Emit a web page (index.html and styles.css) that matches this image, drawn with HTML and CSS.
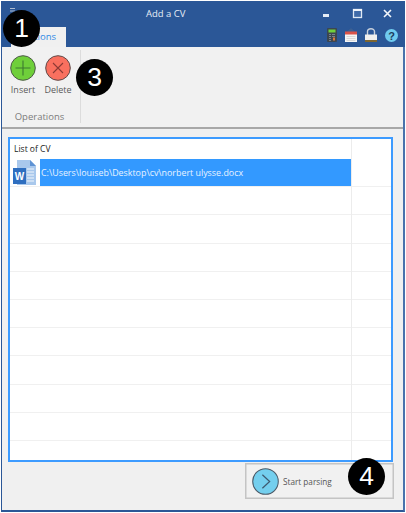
FILE: index.html
```html
<!DOCTYPE html>
<html lang="en">
<head>
<meta charset="utf-8">
<title>Add a CV</title>
<link rel="stylesheet" href="styles.css">
</head>
<body>
<div class="window">
  <header class="titlebar">
    <div class="title-row">
      <svg class="app-icon" width="5" height="4" viewBox="0 0 5 4"><path d="M0 .5h5M0 3h5" stroke="#aebcd0"/></svg>
      <span class="title">Add a CV</span>
      <div class="win-controls">
        <svg class="win-btn" width="12" height="12" viewBox="0 0 12 12"><rect x="1" y="6" width="6" height="3" fill="#e4ecf6"/></svg>
        <svg class="win-btn" width="12" height="12" viewBox="0 0 12 12"><rect x="1.500" y="1.500" width="8" height="8" fill="#3f6aa8" stroke="#dfe8f4" stroke-width="1.300"/><rect x="1" y="1" width="9" height="2" fill="#eef3fa"/></svg>
        <svg class="win-btn" width="12" height="12" viewBox="0 0 12 12"><path d="M2 2l7 7M9 2l-7 7" stroke="#f2f6fb" stroke-width="1.600" fill="none"/></svg>
      </div>
    </div>
    <div class="tab-row">
      <div class="tab">Options</div>
      <div class="tools">
        <svg class="tool-calc" width="10" height="14" viewBox="0 0 10 14"><rect width="10" height="14" rx="1" fill="#3c4650"/><rect x="1.500" y="1.500" width="7" height="3" fill="#6fd03c"/><path d="M2 6.500h2M5 6.500h3M2 8.500h2M5 8.500h3M2 10.500h2M2 12.500h2" stroke="#79838c"/><rect x="6" y="9.500" width="2" height="3" fill="#d9783a"/></svg>
        <svg width="12" height="14" viewBox="0 0 12 14"><path d="M1.500 4L6 0l4.500 4z" fill="#3c5f92"/><rect y="4" width="12" height="10" fill="#f5f5f5"/><rect y="3.500" width="12" height="3" fill="#d9534a"/><path d="M1.500 8.500h9M1.500 10.500h9M1.500 12.500h9" stroke="#d8d8d8"/></svg>
        <svg width="12" height="14" viewBox="0 0 12 14"><path d="M2.500 7V3.500a3.500 2.800 0 0 1 7 0V7" fill="none" stroke="#c9d1dc" stroke-width="1.400"/><rect y="6.500" width="12" height="5.500" fill="#f0f0ee"/><rect y="12" width="12" height="2" fill="#7d6530"/></svg>
        <svg width="13" height="13" viewBox="0 0 13 13"><circle cx="6.500" cy="6.500" r="6.500" fill="#6fcbef"/><text x="6.500" y="10.500" class="help-mark" text-anchor="middle">?</text></svg>
      </div>
    </div>
  </header>

  <section class="ribbon">
    <div class="group">
      <div class="actions">
        <div class="action">
          <svg width="26" height="26" viewBox="0 0 26 26"><circle cx="13" cy="13" r="12.300" fill="#6fcf3a" stroke="#4d5a48" stroke-width="1"/><path d="M13 5.500v15M5.500 13h15" stroke="#3c7a30" stroke-width="1.100"/></svg>
          <span>Insert</span>
        </div>
        <div class="action">
          <svg width="26" height="26" viewBox="0 0 26 26"><circle cx="13" cy="13" r="12.300" fill="#f9705f" stroke="#5f4a48" stroke-width="1"/><path d="M8 8l10 10M18 8L8 18" stroke="#8c3a34" stroke-width="1.100"/></svg>
          <span>Delete</span>
        </div>
      </div>
      <div class="group-label">Operations</div>
    </div>
  </section>

  <main class="content">
    <div class="list">
      <div class="list-head">List of CV</div>
      <div class="row row-first">
        <svg class="doc-icon" width="24" height="27" viewBox="0 0 24 27">
          <path d="M4 1h13l6 6v19H4z" fill="#a9c8ec"/>
          <path d="M17 1l6 6h-6z" fill="#5f93d4"/>
          <path d="M14 10h7M14 13h7M14 16h7M14 19h7M14 22h7" stroke="#f0f6fc" stroke-width="1"/>
          <rect x="0" y="9" width="13" height="16" fill="#2f6fc0"/>
          <text x="6.500" y="21" class="doc-w" text-anchor="middle">W</text>
        </svg>
        <div class="cell-selected">C:\Users\louiseb\Desktop\cv\norbert ulysse.docx</div>
      </div>
      <div class="row"></div>
      <div class="row"></div>
      <div class="row"></div>
      <div class="row"></div>
      <div class="row"></div>
      <div class="row"></div>
      <div class="row"></div>
      <div class="row"></div>
      <div class="row"></div>
      <div class="column-line"></div>
    </div>
    <div class="footer">
      <button class="start" type="button">
        <svg width="27" height="27" viewBox="0 0 26 26"><circle cx="13" cy="13" r="12.300" fill="#74cfee" stroke="#4a5a68" stroke-width="1"/><path d="M10 6.500l7 6.500-7 6.500" fill="none" stroke="#3f5a70" stroke-width="1.200"/></svg>
        <span>Start parsing</span>
      </button>
    </div>
  </main>

  <div class="badge badge-1">1</div>
  <div class="badge badge-3">3</div>
  <div class="badge badge-4">4</div>
</div>
</body>
</html>
```

FILE: styles.css
```css
* { box-sizing: border-box; }
html, body { margin: 0; padding: 0; }
body { width: 406px; height: 513px; background: #fff; font-family: "Open Sans", "Noto Sans", sans-serif; overflow: hidden; }

.window {
  position: relative;
  width: 404px;
  height: 511px;
  margin: 1px 0 0 1px;
  background: #f0f0f0;
  border-left: 1px solid #2b5797;
  border-right: 2px solid #4a72ac;
  border-bottom: 2px solid #2b5797;
  display: flex;
  flex-direction: column;
}

.titlebar { height: 46px; background: #2b5797; flex: none; margin-right: -2px; }
.title-row { height: 26px; position: relative; display: flex; justify-content: space-between; align-items: center; padding-left: 8px; }
.app-icon { display: block; margin-bottom: 8px; }
.title { position: absolute; left: 144px; top: 5px; font-size: 9.500px; line-height: 16px; color: #e6edf6; }
.win-controls { display: flex; gap: 18px; padding-right: 11px; }
.win-btn { display: block; }

.tab-row { height: 20px; display: flex; justify-content: space-between; align-items: flex-start; }
.tab {
  margin-left: 9px;
  width: 55px;
  height: 20px;
  background: #f0f0f0;
  color: #2f8ae6;
  font-size: 9.500px;
  line-height: 20px;
  text-align: center;
  font-weight: 400;
}
.tools { display: flex; align-items: center; gap: 8px; padding-right: 7px; margin-top: 1px; }
.tools svg { display: block; }
.tools .tool-calc { margin-right: 0; }
.help-mark { font: 700 11px "Liberation Sans", sans-serif; fill: #1d3c5c; }

.ribbon { height: 82px; flex: none; background: #f1f1f1; border-bottom: 2px solid #a8a8a8; display: flex; }
.group { width: 79px; border-right: 1px solid #dcdcdc; margin: 3px 0 4px; display: flex; flex-direction: column; }
.actions { display: flex; gap: 9px; padding-left: 8px; padding-top: 5px; }
.action { width: 26px; display: flex; flex-direction: column; align-items: center; gap: 2px; }
.action svg { display: block; }
.action span { font-size: 9px; line-height: 14px; color: #5a5a5a; white-space: nowrap; }
.group-label { margin-top: auto; padding-right: 3px; text-align: center; font-size: 9.500px; line-height: 12px; color: #7c7c7c; }

.content { flex: 1; display: flex; flex-direction: column; padding: 8px 10px 0 6px; }
.list { position: relative; height: 325px; background: #fff; border: 2px solid #3d9bff; display: flex; flex-direction: column; flex: none; overflow: hidden; }
.list-head { height: 20px; padding-left: 4px; font-size: 8.500px; line-height: 20px; color: #222; flex: none; }
.row { height: 28.200px; flex: none; border-bottom: 1px solid #f0f0f0; }
.row-first { display: flex; align-items: stretch; }
.doc-icon { display: block; flex: none; margin: 0 3px; }
.cell-selected {
  width: 311px;
  flex: none;
  background: #3399ff;
  color: #e8f3ff;
  font-size: 8.900px;
  line-height: 27px;
  white-space: nowrap;
  padding-left: 1px;
}
.doc-w { font: 700 10px "Liberation Sans", sans-serif; fill: #fff; }
.column-line { position: absolute; left: 341px; top: 0; bottom: 0; width: 1px; background: #ececec; }

.footer { display: flex; justify-content: flex-end; padding-top: 1px; }
.start {
  width: 149px;
  height: 36px;
  margin-right: -1px;
  background: #f1f1f1;
  border: 1px solid #c4c4c4;
  box-shadow: inset 0 0 0 0.500px #c4c4c4;
  display: flex;
  align-items: center;
  gap: 4px;
  padding: 0 0 0 6px;
  font-family: inherit;
  font-size: 8.200px;
  color: #555;
  cursor: pointer;
}
.start svg { display: block; flex: none; }

.badge {
  position: absolute;
  width: 37px;
  height: 37px;
  border-radius: 50%;
  background: #000;
  color: #fff;
  font: 400 26.500px/37px "Liberation Sans", sans-serif;
  text-align: center;
}
.badge-1 { left: 1px; top: 9px; }
.badge-3 { left: 74px; top: 58px; }
.badge-4 { left: 346px; top: 457px; }
```
